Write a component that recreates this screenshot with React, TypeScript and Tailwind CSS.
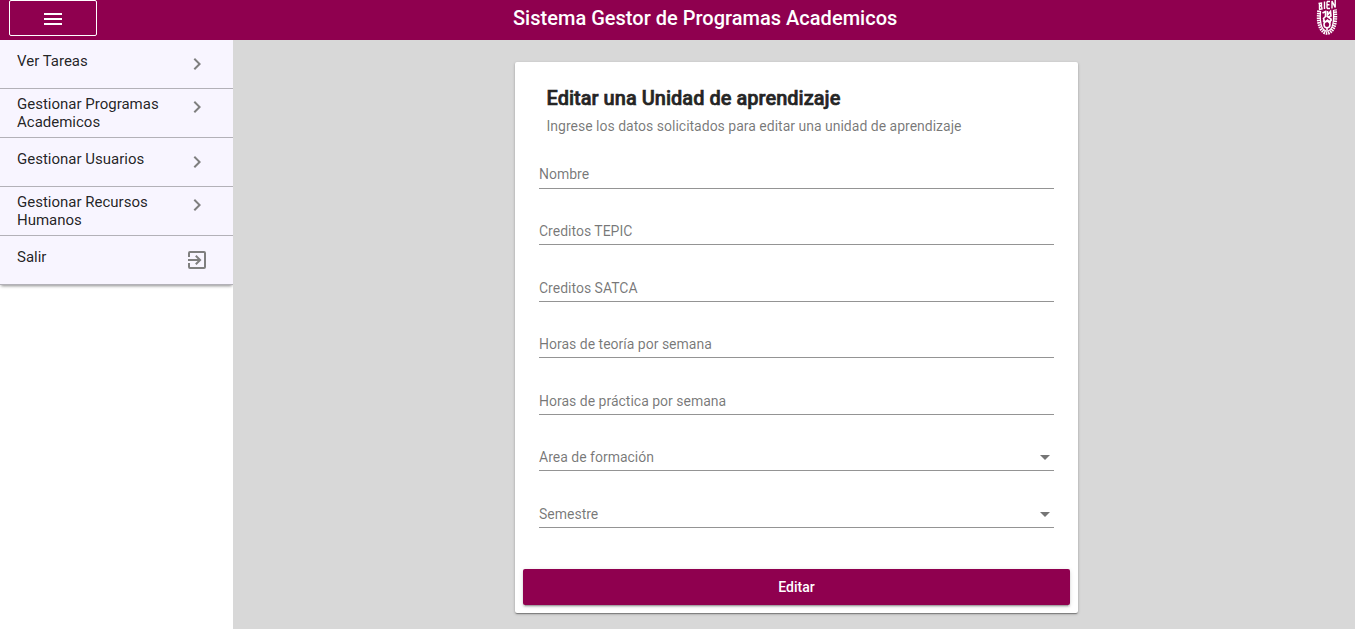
import React from "react";

type MenuItem = { lines: string[]; exit?: boolean };

const menu: MenuItem[] = [
  { lines: ["Ver Tareas"] },
  { lines: ["Gestionar Programas", "Academicos"] },
  { lines: ["Gestionar Usuarios"] },
  { lines: ["Gestionar Recursos", "Humanos"] },
  { lines: ["Salir"], exit: true },
];

const fields = [
  { label: "Nombre" },
  { label: "Creditos TEPIC" },
  { label: "Creditos SATCA" },
  { label: "Horas de teoría por semana" },
  { label: "Horas de práctica por semana" },
  { label: "Area de formación", select: true },
  { label: "Semestre", select: true },
];

function Crest() {
  return (
    <svg width="22" height="36" viewBox="0 0 22 36" fill="none" stroke="#fff">
      <path d="M3.500 3v6.500M2.500 3.500l3-.5v2.500l-2 .5m2 0l.5 3-3 .5M8.500 1.500v7.500M11 1.500v7M11 1.500h3M11 4.800h2.500M11 8.500h3M16 8.500V1l3.200 6.500V0" strokeWidth="1.400" />
      <path d="M2.800 10.500c-.8 8-.5 13 1.700 17.500 3.500 7 9.500 7 13 0 2.200-4.500 2.500-10 1.700-18.500" strokeWidth="3.200" strokeDasharray="1.500 0.800" />
      <path d="M4.500 11c-.6 7-.3 12 1.500 16 2.800 5.500 7.200 5.500 10 0 1.800-4 2-9 1.500-17" strokeWidth="1.300" />
      <path d="M6.500 13l3-1.500v5l-2 2 1 3M11.500 11v4l3-3.500.5 4.500-3 1 3 2-1 3-2.500-2-2 2" strokeWidth="1.600" />
      <ellipse cx="11" cy="24.500" rx="3" ry="3.300" strokeWidth="1.600" />
      <path d="M7 20.500l2 2m6.500-3l-2.500 3.500M11 28v2.500" strokeWidth="1.600" />
    </svg>
  );
}

function Sidebar() {
  return (
    <aside className="w-[233px] shrink-0 overflow-hidden bg-white">
      <nav className="bg-[#f8f5ff] shadow-[0_2px_3px_-1px_rgba(0,0,0,0.45)]">
        {menu.map((item) => (
          <a
            key={item.lines[0]}
            className="flex h-[49px] items-start justify-between border-b border-[#b3b1b8] pl-[17px] pr-6 text-[15px] leading-[18px] text-black/87"
          >
            <span className={item.lines.length > 1 ? "pt-[6px]" : "pt-3"}>
              {item.lines.map((line) => (
                <span key={line} className="block">{line}</span>
              ))}
            </span>
            <svg
              viewBox="0 0 24 24"
              className={item.lines.length > 1 ? "mt-[6px] size-6 fill-[#7f7f7f]" : "mt-3 size-6 fill-[#7f7f7f]"}
            >
              {item.exit ? (
                <path d="M10.090 15.590 11.500 17l5-5-5-5-1.410 1.410L12.670 11H3v2h9.670l-2.580 2.590zM19 3H5a2 2 0 0 0-2 2v4h2V5h14v14H5v-4H3v4a2 2 0 0 0 2 2h14a2 2 0 0 0 2-2V5a2 2 0 0 0-2-2z" />
              ) : (
                <path d="M10 6 8.590 7.410 13.170 12l-4.580 4.590L10 18l6-6z" />
              )}
            </svg>
          </a>
        ))}
      </nav>
    </aside>
  );
}

export default function App() {
  return (
    <div className="flex h-[629px] flex-col overflow-hidden bg-[#d8d8d8] font-['Roboto',sans-serif]">
      <header className="grid h-10 shrink-0 grid-cols-[504px_1fr_auto] items-start bg-[#8f004f] pl-[9px] pr-[17px] text-white">
        <button className="flex h-9 w-[88px] items-center justify-center rounded-[2px] border border-white pt-[2px]">
          <svg viewBox="0 0 24 24" className="size-6 fill-white">
            <path d="M3 18h18v-2H3v2zm0-5h18v-2H3v2zm0-7v2h18V6H3z" />
          </svg>
        </button>
        <h1 className="pt-[2px] text-xl font-medium leading-8 tracking-[0.015px]">Sistema Gestor de Programas Academicos</h1>
        <Crest />
      </header>
      <div className="flex min-h-0 flex-1">
        <Sidebar />
        <main className="flex flex-1 pl-[282px] pt-[22px]">
          <section className="flex h-[551px] w-[563px] flex-col rounded-[2px] bg-white px-2 pb-2 shadow-[0_2px_1px_-1px_rgba(0,0,0,0.2),0_1px_1px_0_rgba(0,0,0,0.14),0_1px_3px_0_rgba(0,0,0,0.25)]">
            <div className="pl-[23.5px] pt-6">
              <h2 className="text-xl font-medium leading-6 tracking-[0.02px] text-black/87 [-webkit-text-stroke:0.6px_#212121]">Editar una Unidad de aprendizaje</h2>
              <p className="mt-[6px] text-sm leading-5 text-black/54">
                Ingrese los datos solicitados para editar una unidad de aprendizaje
              </p>
            </div>
            <form className="-mt-1 flex flex-1 flex-col px-4">
              {fields.map((f) => (
                <div key={f.label} className="flex h-[56.5px] w-[515px] items-end justify-between border-b border-[#949494] pb-[5px] text-sm leading-4 text-black/54 first:pb-[6px]">
                  <span>{f.label}</span>
                  {f.select && (
                    <svg viewBox="0 0 10 5" className="mb-[5px] mr-1 h-[5px] w-[10px] fill-[#757575]">
                      <path d="M0 0h10L5 5z" />
                    </svg>
                  )}
                </div>
              ))}
            </form>
            <button className="h-9 w-full shrink-0 rounded-[2px] bg-[#8f004f] text-sm font-medium text-white shadow-[0_3px_1px_-2px_rgba(0,0,0,0.2),0_2px_2px_0_rgba(0,0,0,0.14),0_1px_5px_0_rgba(0,0,0,0.12)]">
              Editar
            </button>
          </section>
        </main>
      </div>
    </div>
  );
}
